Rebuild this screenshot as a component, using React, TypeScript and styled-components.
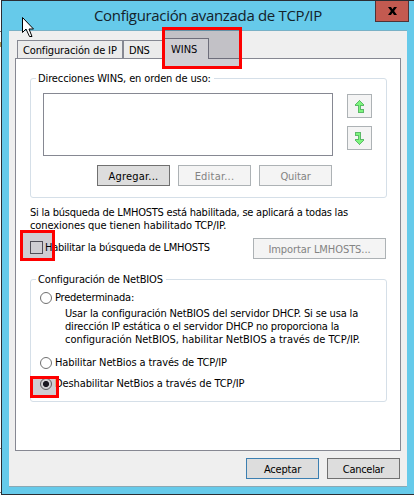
import React from 'react';
import styled, { createGlobalStyle, css } from 'styled-components';

const Global = createGlobalStyle`
  *, *::before, *::after { box-sizing: border-box; }
  body { margin: 0; background: #fff; }
`;

const Desktop = styled.main`
  position: relative;
  width: 414px;
  height: 496px;
  padding-left: 1px;
  overflow: hidden;
  background: linear-gradient(#77736f, #77736f) 0 31px / 1px 1px no-repeat,
    linear-gradient(#b19a55, #b19a55) 0 42px / 1px 5px no-repeat,
    linear-gradient(#888, #888) 0 448px / 1px 1px no-repeat,
    linear-gradient(#777, #777) 0 492px / 1px 1px no-repeat, #fff;
  font: 11px/13px 'DejaVu Sans Condensed', 'DejaVu Sans', sans-serif;
  color: #000;
`;

const Window = styled.section`
  display: flex;
  flex-direction: column;
  width: 413px;
  height: 495px;
  padding: 0 7px 7px;
  border: solid #2b2d33;
  border-width: 1px 0 1px 1px;
  background: #66caea;
`;

const TitleBar = styled.header`
  display: flex;
  flex: none;
  height: 29px;
  padding-left: 85px;
  justify-content: space-between;
`;

const Title = styled.h1`
  margin: 3px 0 0;
  font: 15px/22px 'Open Sans', 'Noto Sans', sans-serif;
  letter-spacing: -0.33px;
  color: #14222a;
  white-space: nowrap;
`;

const Close = styled.button`
  display: grid;
  place-items: center;
  width: 34px;
  height: 21px;
  margin-right: -2px;
  padding: 0;
  border: 1px solid #4f3236;
  border-top: 0;
  background: #c35a50;
`;

const Client = styled.div`
  display: flex;
  flex: 1;
  flex-direction: column;
  padding: 7px 6px;
  border-top: 1px solid #79b1c6;
  border-bottom: 1px solid #8aa8b4;
  background: #efefef;
`;

const Tabs = styled.nav`
  display: flex;
  align-items: flex-end;
  height: 20px;
  padding-left: 2px;
`;

const Tab = styled.div<{ $w: number; $active?: boolean }>`
  width: ${p => p.$w}px;
  height: ${p => (p.$active ? 21 : 18)}px;
  margin-bottom: ${p => (p.$active ? -1 : 0)}px;
  padding: ${p => (p.$active ? '4px 0 0 6px' : '3px 0 0 5px')};
  border: 1px solid #868892;
  border-bottom: 0;
  border-left-width: ${p => (p.$active ? 0 : 1)}px;
  background: ${p => (p.$active ? '#fff' : '#ebebeb')};
  z-index: ${p => (p.$active ? 1 : 0)};
`;

const Page = styled.div`
  display: flex;
  flex-direction: column;
  height: 393px;
  padding: 13px 14px 0;
  border: 1px solid #868892;
  background: #fff;
`;

const Line = styled.span<{ $ls: number }>`
  display: block;
  letter-spacing: ${p => p.$ls}px;
  white-space: nowrap;
`;

const Group = styled.div<{ $h: number; $mt?: number }>`
  position: relative;
  flex: none;
  width: 357px;
  height: ${p => p.$h}px;
  margin-top: ${p => p.$mt ?? 0}px;
  &::before {
    content: '';
    position: absolute;
    inset: 6px 0 0;
    border: 1px solid #d5dfe8;
    border-radius: 3px;
  }
`;

const Legend = styled.div`
  position: relative;
  width: max-content;
  height: 13px;
  margin-left: 6px;
  padding: 0 3px 0 2px;
  background: #fff;
`;

const ListRow = styled.div`
  position: relative;
  display: flex;
  gap: 14px;
  margin: 8px 0 0 13px;
`;

const ListBox = styled.div`
  width: 290px;
  height: 63px;
  border: 1px solid #868892;
  background: #fff;
`;

const Arrows = styled.div`
  display: flex;
  flex-direction: column;
  gap: 8px;
  padding-top: 1px;
`;

const ButtonRow = styled.div`
  position: relative;
  display: flex;
  justify-content: flex-end;
  gap: 8px;
  margin: 9px 55px 0 0;
`;

const Button = styled.button<{ $w?: number; $h?: number; $primary?: boolean }>`
  display: grid;
  place-items: center;
  flex: none;
  width: ${p => p.$w ?? 73}px;
  height: ${p => p.$h ?? 21}px;
  padding: 1px 0 0;
  border: 1px solid ${p => (p.$primary ? '#3c7fb1' : '#707070')};
  background: #dddddd;
  font: inherit;
  color: #000;
  ${p =>
    p.disabled &&
    css`
      border-color: #adb2b5;
      background: #f4f4f4;
      color: #838383;
    `}
`;

const Note = styled.p`
  margin: 8px 0 0;
`;

const LookupRow = styled.div`
  display: flex;
  justify-content: space-between;
  margin-top: 6px;
`;

const Option = styled.label<{ $mt: number; $gap?: number }>`
  position: relative;
  display: flex;
  align-items: center;
  gap: ${p => p.$gap ?? 3}px;
  height: 13px;
  margin-top: ${p => p.$mt}px;
`;

const CheckBox = styled.span`
  width: 13px;
  height: 13px;
  border: 1px solid #606066;
  background: #fff;
`;

const Radio = styled.span<{ $on?: boolean }>`
  width: 12px;
  height: 12px;
  border: 1px solid #707070;
  border-radius: 50%;
  background: ${p => (p.$on ? 'radial-gradient(circle, #1c1b22 2.7px, #fff 3.4px)' : '#fff')};
`;

const Options = styled.div`
  position: relative;
  padding-left: 10px;
`;

const Description = styled.div`
  margin: 3px 0 0 25px;
`;

const Footer = styled.footer`
  display: flex;
  justify-content: flex-end;
  gap: 8px;
  margin: 7px 1px 0 0;
`;

const Marker = styled.div<{ $x: number; $y: number; $w: number; $h: number }>`
  position: absolute;
  z-index: 3;
  left: ${p => p.$x}px;
  top: ${p => p.$y}px;
  width: ${p => p.$w}px;
  height: ${p => p.$h}px;
  border: 3px solid #fe0000;
  background: rgba(15, 10, 35, 0.2);
  background-clip: padding-box;
`;

const Cursor = styled.svg`
  position: absolute;
  z-index: 4;
  left: 22px;
  top: 17px;
`;

const ArrowIcon = ({ down }: { down?: boolean }) => (
  <svg width="11" height="13" viewBox="0 0 11 13" shapeRendering="crispEdges">
    <path
      d={
        down
          ? 'M1.5.5h5v7h3v1l-4 4-4-4v-1h3v-4h-3z'
          : 'M5.500.5l4 4v1h-3v4h3v3h-5v-7h-3v-1z'
      }
      fill="#7cf57c"
      stroke="#5cb968"
    />
  </svg>
);

export default function App() {
  return (
    <Desktop>
      <Global />
      <Window>
        <TitleBar>
          <Title>Configuración avanzada de TCP/IP</Title>
          <Close aria-label="Cerrar">
            <svg width="9" height="8" viewBox="0 0 9 8">
              <path d="M0 0h3l1.500 2.300L6 0h3L6.100 4 9 8H6L4.500 5.700 3 8H0l2.900-4z" fill="#000" />
            </svg>
          </Close>
        </TitleBar>
        <Client>
          <Tabs>
            <Tab $w={106}><Line $ls={-0.13}>Configuración de IP</Line></Tab>
            <Tab $w={42}><Line $ls={-0.2}>DNS</Line></Tab>
            <Tab $w={44} $active><Line $ls={0}>WINS</Line></Tab>
          </Tabs>
          <Page>
            <Group $h={126}>
              <Legend><Line $ls={-0.12}>Direcciones WINS, en orden de uso:</Line></Legend>
              <ListRow>
                <ListBox />
                <Arrows>
                  <Button disabled $w={25} $h={24} aria-label="Subir"><ArrowIcon /></Button>
                  <Button disabled $w={25} $h={24} aria-label="Bajar"><ArrowIcon down /></Button>
                </Arrows>
              </ListRow>
              <ButtonRow>
                <Button><Line $ls={0.2}>Agregar...</Line></Button>
                <Button disabled><Line $ls={0.22}>Editar...</Line></Button>
                <Button disabled><Line $ls={-0.1}>Quitar</Line></Button>
              </ButtonRow>
            </Group>
            <Note>
              <Line $ls={-0.23}>Si la búsqueda de LMHOSTS está habilitada, se aplicará a todas las</Line>
              <Line $ls={-0.08}>conexiones que tienen habilitado TCP/IP.</Line>
            </Note>
            <LookupRow>
              <Option $mt={3} $gap={2}>
                <CheckBox />
                <Line $ls={-0.24}>Habilitar la búsqueda de LMHOSTS</Line>
              </Option>
              <Button disabled $w={133}><Line $ls={-0.07}>Importar LMHOSTS...</Line></Button>
            </LookupRow>
            <Group $h={129} $mt={14}>
              <Legend><Line $ls={-0.15}>Configuración de NetBIOS</Line></Legend>
              <Options>
                <Option $mt={5}><Radio /><Line $ls={-0.22}>Predeterminada:</Line></Option>
                <Description>
                  <Line $ls={-0.155}>Usar la configuración NetBIOS del servidor DHCP. Si se usa la</Line>
                  <Line $ls={-0.18}>dirección IP estática o el servidor DHCP no proporciona la</Line>
                  <Line $ls={-0.03}>configuración NetBIOS, habilitar NetBIOS a través de TCP/IP.</Line>
                </Description>
                <Option $mt={10}><Radio /><Line $ls={-0.11}>Habilitar NetBios a través de TCP/IP</Line></Option>
                <Option $mt={8}><Radio $on /><Line $ls={-0.11}>Deshabilitar NetBios a través de TCP/IP</Line></Option>
              </Options>
            </Group>
          </Page>
          <Footer>
            <Button $primary><Line $ls={-0.2}>Aceptar</Line></Button>
            <Button><Line $ls={-0.3}>Cancelar</Line></Button>
          </Footer>
        </Client>
      </Window>
      <Marker $x={162} $y={27} $w={80} $h={42} />
      <Marker $x={20} $y={230} $w={35} $h={31} />
      <Marker $x={30} $y={376} $w={29} $h={22} />
      <Cursor width="13" height="22" viewBox="0 0 13 22">
        <path d="M.5.5v15l3.500-3.500 3.500 7.500h2.500l-3-7.500h4.500z" fill="#fff" stroke="#000" />
      </Cursor>
    </Desktop>
  );
}
